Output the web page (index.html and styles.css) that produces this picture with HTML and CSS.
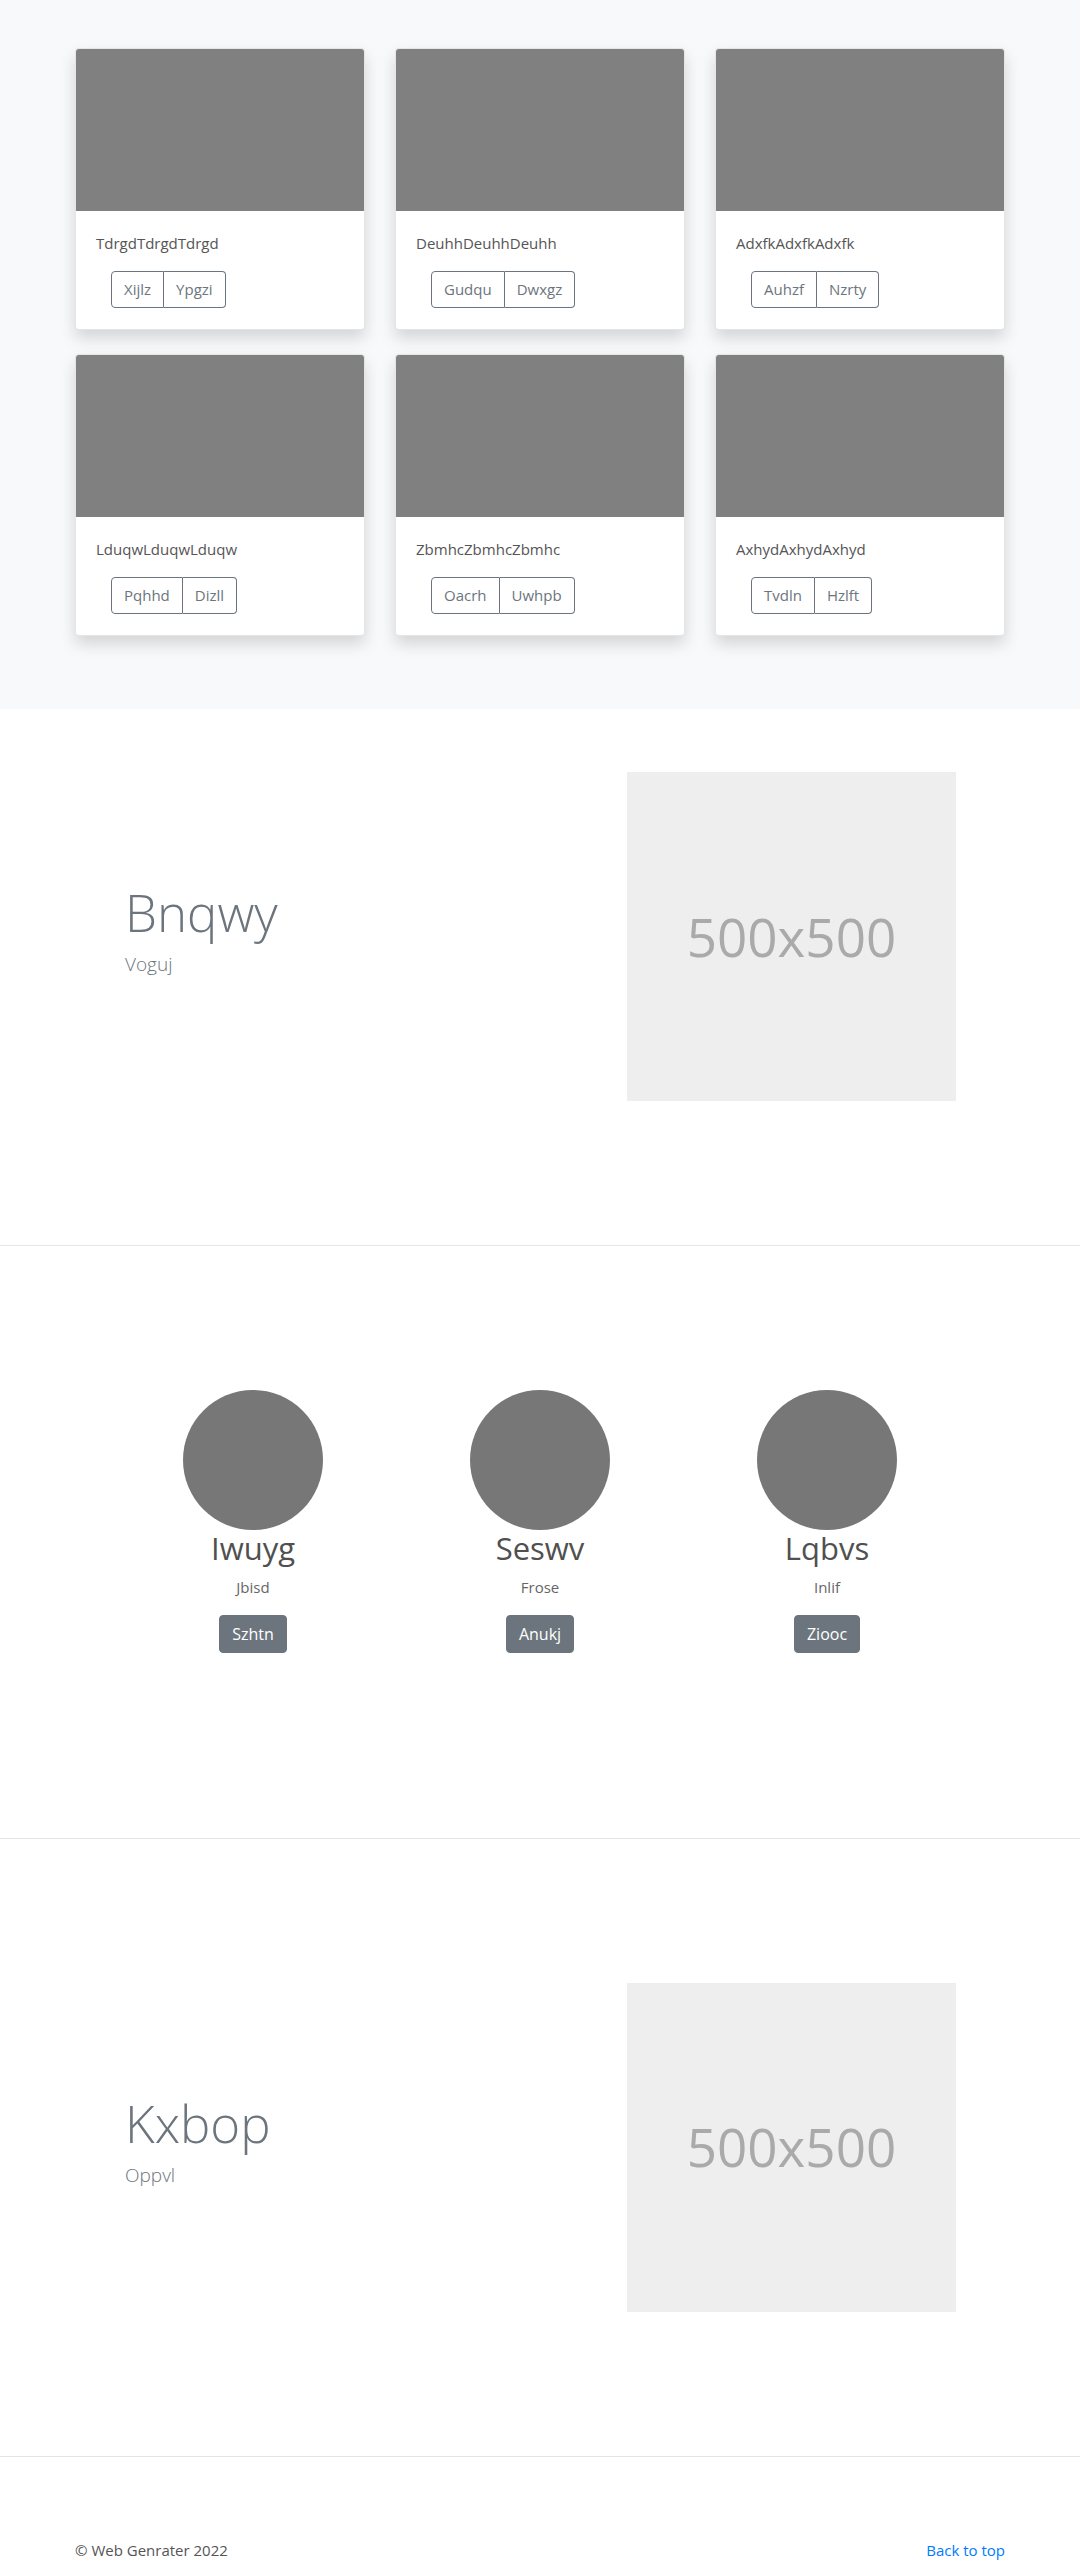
FILE: index.html
```html
<!DOCTYPE html>
<html>
<head>
    <title>Web Genrater</title>
    <link rel="stylesheet" href="styles.css">
</head>
<body>
    <section class="album">
        <div class="container">
            <div class="card-grid">
                <div class="card">
                    <div class="card-img"></div>
                    <div class="card-body">
                        <p class="card-text">TdrgdTdrgdTdrgd</p>
                        <div class="btn-group">
                            <button class="btn btn-outline">Xijlz</button>
                            <button class="btn btn-outline">Ypgzi</button>
                        </div>
                    </div>
                </div>
                <div class="card">
                    <div class="card-img"></div>
                    <div class="card-body">
                        <p class="card-text">DeuhhDeuhhDeuhh</p>
                        <div class="btn-group">
                            <button class="btn btn-outline">Gudqu</button>
                            <button class="btn btn-outline">Dwxgz</button>
                        </div>
                    </div>
                </div>
                <div class="card">
                    <div class="card-img"></div>
                    <div class="card-body">
                        <p class="card-text">AdxfkAdxfkAdxfk</p>
                        <div class="btn-group">
                            <button class="btn btn-outline">Auhzf</button>
                            <button class="btn btn-outline">Nzrty</button>
                        </div>
                    </div>
                </div>
                <div class="card">
                    <div class="card-img"></div>
                    <div class="card-body">
                        <p class="card-text">LduqwLduqwLduqw</p>
                        <div class="btn-group">
                            <button class="btn btn-outline">Pqhhd</button>
                            <button class="btn btn-outline">Dizll</button>
                        </div>
                    </div>
                </div>
                <div class="card">
                    <div class="card-img"></div>
                    <div class="card-body">
                        <p class="card-text">ZbmhcZbmhcZbmhc</p>
                        <div class="btn-group">
                            <button class="btn btn-outline">Oacrh</button>
                            <button class="btn btn-outline">Uwhpb</button>
                        </div>
                    </div>
                </div>
                <div class="card">
                    <div class="card-img"></div>
                    <div class="card-body">
                        <p class="card-text">AxhydAxhydAxhyd</p>
                        <div class="btn-group">
                            <button class="btn btn-outline">Tvdln</button>
                            <button class="btn btn-outline">Hzlft</button>
                        </div>
                    </div>
                </div>
            </div>
        </div>
    </section>

    <section class="featurette first">
        <div class="container feature-row">
            <div class="feature-text">
                <h2 class="feature-heading">Bnqwy</h2>
                <p class="lead">Voguj</p>
            </div>
            <div class="placeholder">500x500</div>
        </div>
    </section>

    <hr class="divider">

    <section class="team">
        <div class="team-grid">
            <div class="member">
                <div class="avatar"></div>
                <h2>Iwuyg</h2>
                <p>Jbisd</p>
                <a class="btn btn-secondary" href="#">Szhtn</a>
            </div>
            <div class="member">
                <div class="avatar"></div>
                <h2>Seswv</h2>
                <p>Frose</p>
                <a class="btn btn-secondary" href="#">Anukj</a>
            </div>
            <div class="member">
                <div class="avatar"></div>
                <h2>Lqbvs</h2>
                <p>Inlif</p>
                <a class="btn btn-secondary" href="#">Ziooc</a>
            </div>
        </div>
    </section>

    <hr class="divider">

    <section class="featurette">
        <div class="container feature-row">
            <div class="feature-text">
                <h2 class="feature-heading">Kxbop</h2>
                <p class="lead">Oppvl</p>
            </div>
            <div class="placeholder">500x500</div>
        </div>
    </section>

    <hr class="divider">

    <footer class="footer">
        <div class="container footer-row">
            <p>&copy; Web Genrater 2022</p>
            <a href="#">Back to top</a>
        </div>
    </footer>
</body>
</html>
```

FILE: styles.css
```css
body {
    margin: 0;
    font-family: "Open Sans", "Noto Sans", sans-serif;
    font-size: 16px;
    line-height: 1.5;
    color: #555;
    background: white;
}
.container {
    max-width: 930px;
    margin: 0 auto;
    padding: 0 15px;
}
.album {
    background: #f8f9fa;
    padding: 48px 0 73px;
}
.card-grid {
    display: grid;
    grid-template-columns: repeat(3, 1fr);
    column-gap: 30px;
    row-gap: 24px;
}
.card {
    background: white;
    border: 1px solid rgba(0,0,0,0.1);
    border-radius: 4px;
    overflow: hidden;
    box-shadow: 0 8px 16px rgba(0,0,0,0.15);
}
.card-img { height: 162px; background: #808080; }
.card-body { padding: 20px 20px 21px; }
.card-text {
    margin: 0 0 16px 0;
    font-size: 15px;
    line-height: 24px;
    color: #555;
}
.btn-group { display: flex; margin-left: 15px; }
.btn {
    display: inline-block;
    font-family: inherit;
    font-size: 15px;
    line-height: 23px;
    padding: 6px 12px;
    border-radius: 4px;
    text-decoration: none;
    cursor: pointer;
}
.btn-outline {
    background: white;
    color: #6c757d;
    border: 1px solid #6c757d;
}
.btn-group .btn-outline:first-child { border-radius: 4px 0 0 4px; }
.btn-group .btn-outline + .btn-outline { border-left: 0; border-radius: 0 4px 4px 0; }

.featurette { padding: 144px 0; }
.featurette.first { padding-top: 63px; }
.feature-row {
    display: flex;
    align-items: center;
    justify-content: space-between;
}
.feature-text { padding: 0 0 10px 50px; }
.feature-heading {
    margin: 0 0 10px 0;
    font-size: 51px;
    font-weight: 300;
    line-height: 1.1;
    color: #6c757d;
}
.lead {
    margin: 0;
    font-size: 19px;
    font-weight: 300;
    line-height: 1.5;
    color: #6c757d;
}
.placeholder {
    width: 329px;
    height: 329px;
    margin-right: 49px;
    background: #eee;
    color: #aaa;
    font-size: 53px;
    display: flex;
    align-items: center;
    justify-content: center;
}
.divider {
    margin: 0;
    border: 0;
    border-top: 1px solid #e5e5e5;
}

.team { padding: 144px 0 185px; }
.team-grid {
    width: 861px;
    margin: 0 auto;
    display: grid;
    grid-template-columns: repeat(3, 1fr);
}
.member { text-align: center; }
.avatar {
    width: 140px;
    height: 140px;
    margin: 0 auto;
    border-radius: 50%;
    background: #777;
}
.member h2 {
    margin: 0;
    font-size: 31px;
    font-weight: 400;
    line-height: 1.2;
    color: #505050;
}
.member p {
    margin: 9px 0 16px;
    font-size: 15px;
    color: #666;
}
.btn-secondary {
    background: #6c757d;
    color: white;
    border: 1px solid #6c757d;
    font-size: 16px;
    line-height: 24px;
}

.footer { padding-top: 82px; }
.footer-row {
    display: flex;
    justify-content: space-between;
}
.footer p { margin: 0; font-size: 15px; color: #555; }
.footer a { font-size: 15px; color: #007bff; text-decoration: none; }
```
